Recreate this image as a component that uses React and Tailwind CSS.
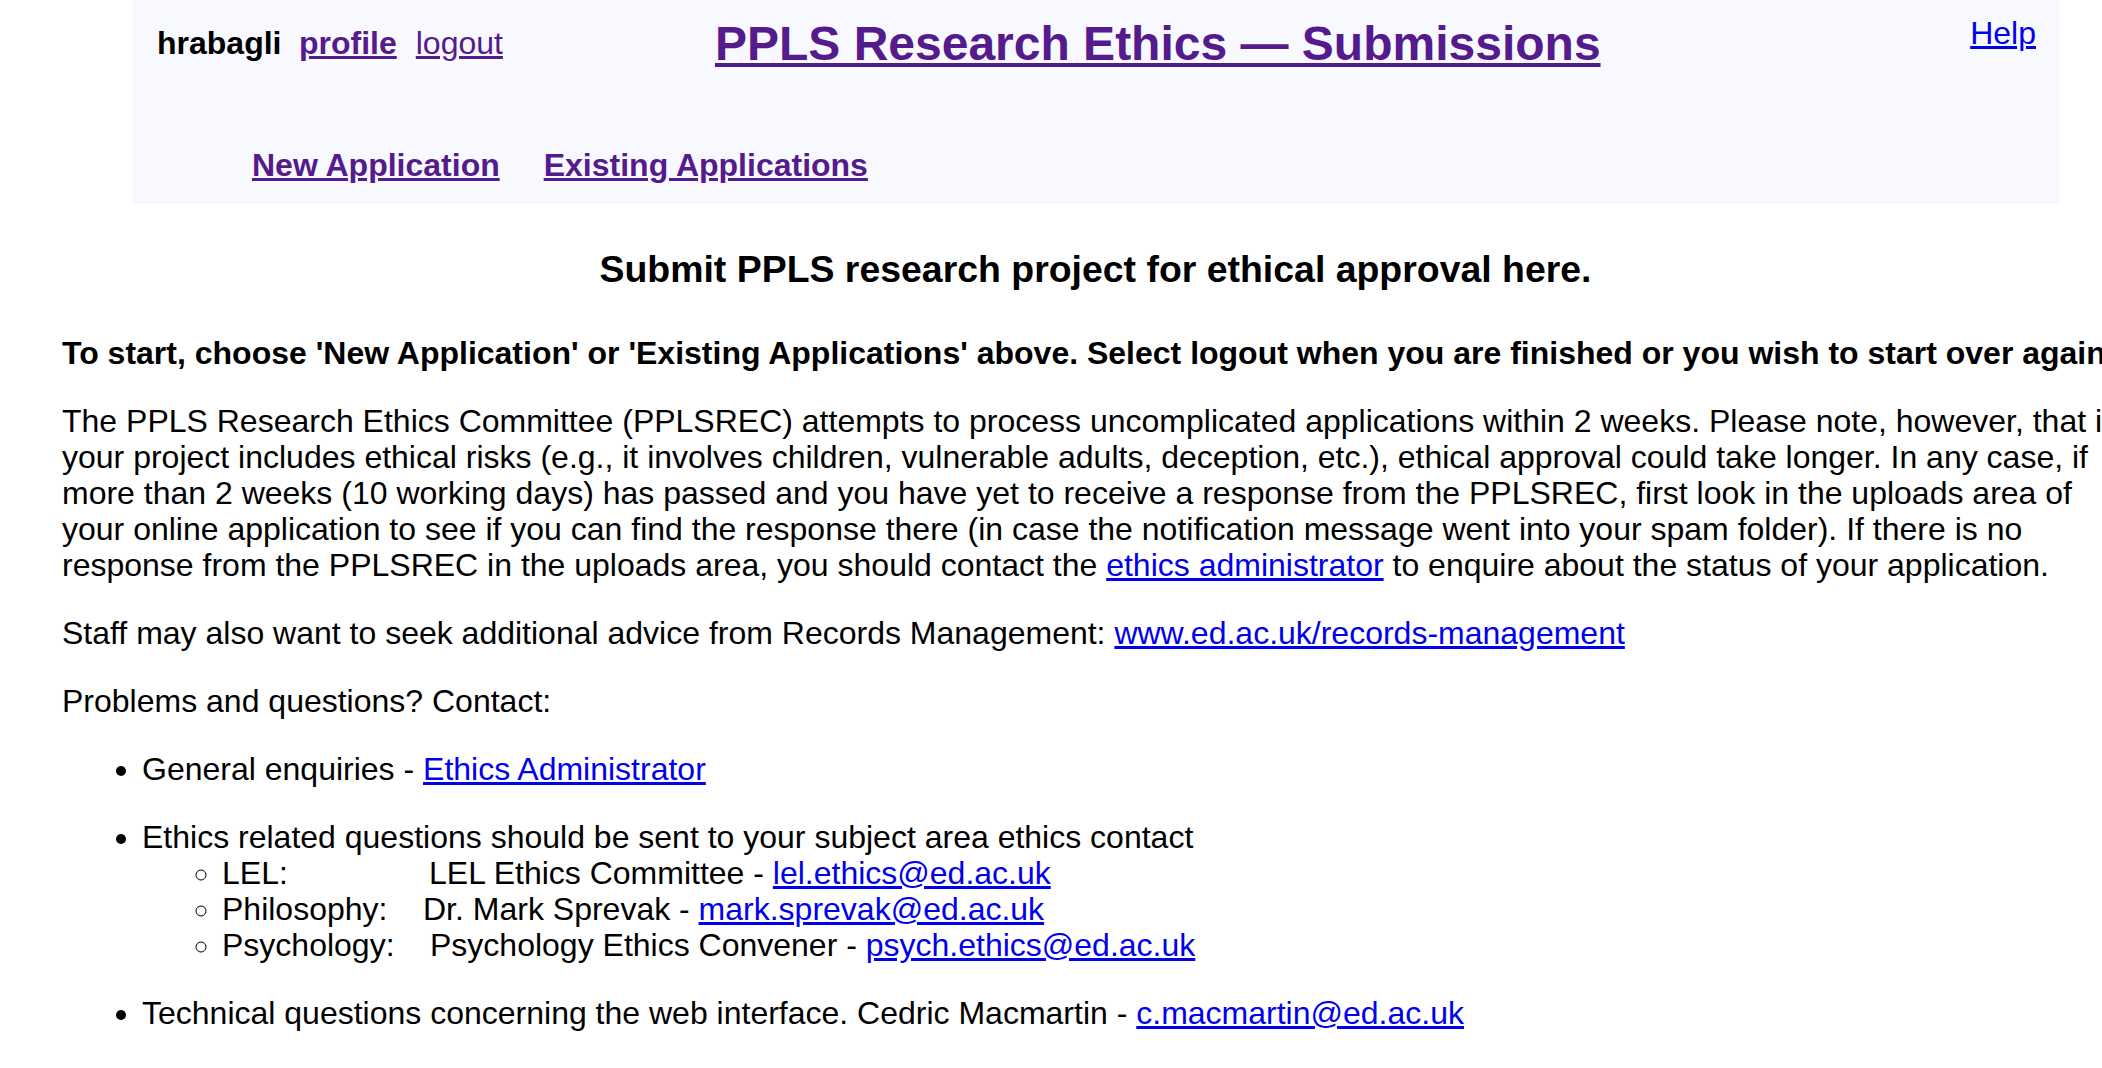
import React from "react";

export default function App() {
  return (
    <div className="w-[2102px] h-[1068px] overflow-hidden bg-white text-black font-['Liberation_Sans',Arial,Helvetica,sans-serif]">
      {/* Header */}
      <div className="ml-[132px] w-[1928px] h-[204px] bg-[#f8f8ff] flex flex-col">
        <div className="flex items-start h-[147px]">
          <div className="pt-[25px] pl-[25px] text-[32px] leading-[36px] whitespace-nowrap">
            <b className="font-bold">hrabagli</b>
            <a href="#" className="ml-[17.5px] font-bold underline text-[#551a8b]">profile</a>
            <a href="#" className="ml-[19px] underline text-[#551a8b]">logout</a>
          </div>
          <a href="#" className="ml-[212px] pt-[16px] text-[48px] leading-[56px] font-bold underline text-[#551a8b] whitespace-nowrap">
            PPLS Research Ethics — Submissions
          </a>
          <a href="#" className="ml-auto mr-[24px] pt-[15px] text-[32px] leading-[36px] underline text-[#0000ee]">
            Help
          </a>
        </div>
        <div className="flex pl-[120px] gap-[44px] text-[32px] leading-[36px] font-bold whitespace-nowrap">
          <a href="#" className="underline text-[#551a8b]">New Application</a>
          <a href="#" className="underline text-[#551a8b]">Existing Applications</a>
        </div>
      </div>

      {/* Main */}
      <div className="ml-[62px] w-[2067px] text-[32px] leading-[36px]">
        <h3 className="mt-[44px] text-center text-[37.44px] leading-[43px] font-bold whitespace-nowrap">
          Submit PPLS research project for ethical approval here.
        </h3>
        <p className="mt-[44px] font-bold whitespace-nowrap">
          To start, choose 'New Application' or 'Existing Applications' above. Select logout when you are finished or you wish to start over again.
        </p>
        <p className="mt-[32px] whitespace-nowrap">
          The PPLS Research Ethics Committee (PPLSREC) attempts to process uncomplicated applications within 2 weeks. Please note, however, that if
          <br />
          your project includes ethical risks (e.g., it involves children, vulnerable adults, deception, etc.), ethical approval could take longer. In any case, if
          <br />
          more than 2 weeks (10 working days) has passed and you have yet to receive a response from the PPLSREC, first look in the uploads area of
          <br />
          your online application to see if you can find the response there (in case the notification message went into your spam folder). If there is no
          <br />
          response from the PPLSREC in the uploads area, you should contact the{" "}
          <a href="#" className="underline text-[#0000ee]">ethics administrator</a> to enquire about the status of your application.
        </p>
        <p className="mt-[32px] whitespace-nowrap">
          Staff may also want to seek additional advice from Records Management:{" "}
          <a href="#" className="underline text-[#0000ee]">www.ed.ac.uk/records-management</a>
        </p>
        <p className="mt-[32px] whitespace-nowrap">Problems and questions? Contact:</p>
        <ul className="mt-[32px] pl-[80px] list-disc whitespace-nowrap">
          <li className="mb-[32px]">
            General enquiries - <a href="#" className="underline text-[#0000ee]">Ethics Administrator</a>
          </li>
          <li className="mb-[32px]">
            Ethics related questions should be sent to your subject area ethics contact
            <ul className="pl-[80px] list-[circle]">
              <li>
                <span className="inline-block w-[207px]">LEL:</span>LEL Ethics Committee -{" "}
                <a href="#" className="underline text-[#0000ee]">lel.ethics@ed.ac.uk</a>
              </li>
              <li>
                <span className="inline-block w-[201px]">Philosophy:</span>Dr. Mark Sprevak -{" "}
                <a href="#" className="underline text-[#0000ee]">mark.sprevak@ed.ac.uk</a>
              </li>
              <li>
                <span className="inline-block w-[208px]">Psychology:</span>Psychology Ethics Convener -{" "}
                <a href="#" className="underline text-[#0000ee]">psych.ethics@ed.ac.uk</a>
              </li>
            </ul>
          </li>
          <li>
            Technical questions concerning the web interface. Cedric Macmartin -{" "}
            <a href="#" className="underline text-[#0000ee]">c.macmartin@ed.ac.uk</a>
          </li>
        </ul>
      </div>
    </div>
  );
}
